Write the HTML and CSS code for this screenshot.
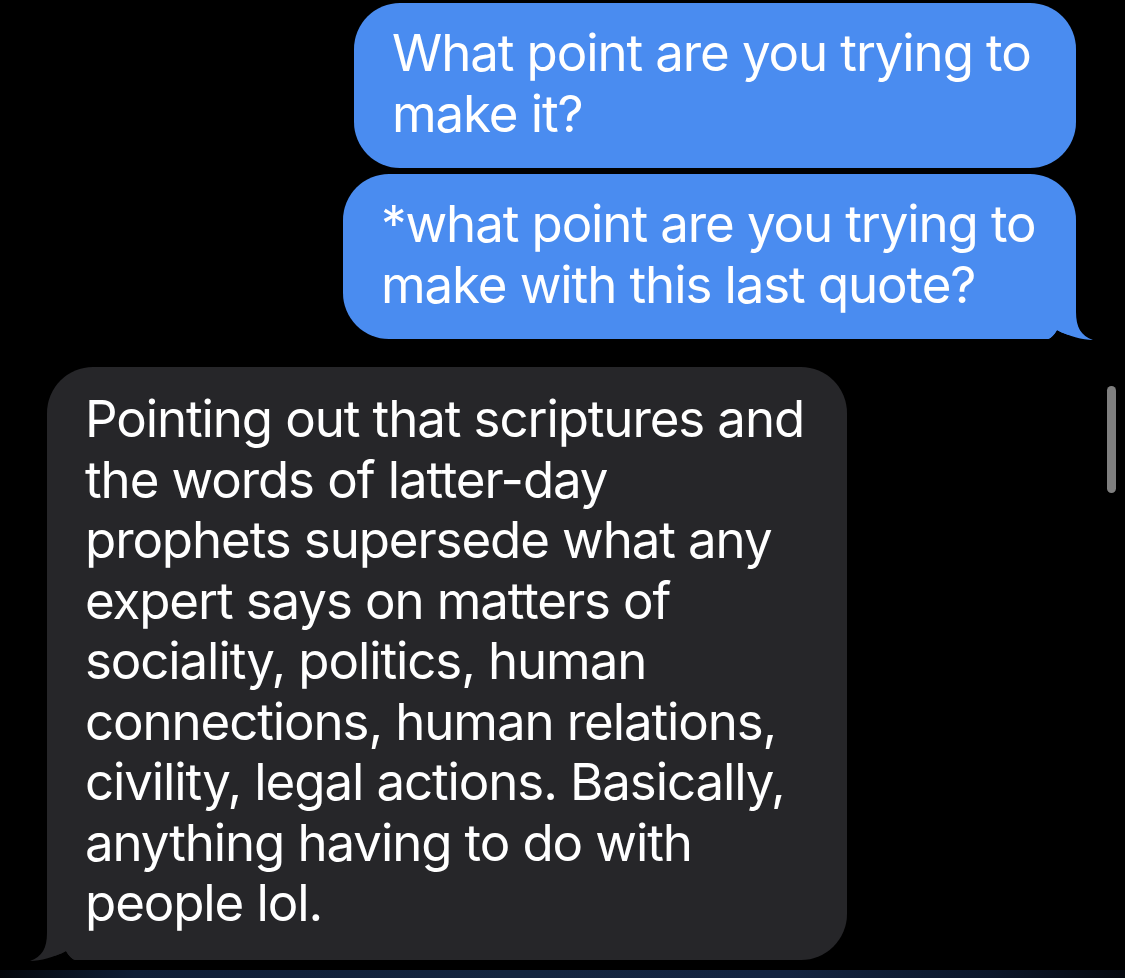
FILE: index.html
```html
<!DOCTYPE html>
<html>
<head>
<meta charset="utf-8">
<link rel="stylesheet" href="styles.css">
</head>
<body>
<div class="screen">
  <div class="thread">
    <div class="row me first">
      <div class="bubble blue w1"><span class="txt">What point are you trying to<br>make it?</span></div>
    </div>
    <div class="row me">
      <div class="bubble blue w2 tail-r"><span class="txt">*what point are you trying to<br>make with this last quote?</span>
        <svg class="tail tail-right" viewBox="0 0 45 53" width="45" height="53"><path class="cut" d="M0 49 C3 48 6 45 9 40 C20 46 35 50 45 50 V53 H0 Z"/><path class="fill-blue" d="M0 0 H28 V22 C28 37 33 46 45 50 C35 50 20 46 9 40 C6 45 3 48 0 49 Z"/></svg>
      </div>
    </div>
    <div class="row them">
      <div class="bubble gray w3 tail-l"><span class="txt">Pointing out that scriptures and<br>the words of latter-day<br>prophets supersede what any<br>expert says on matters of<br>sociality, politics, human<br>connections, human relations,<br>civility, legal actions. Basically,<br>anything having to do with<br>people lol.</span>
        <svg class="tail tail-left" viewBox="0 0 45 53" width="45" height="53"><path class="cut" d="M0 49 C3 48 6 45 9 40 C20 46 35 50 45 50 V53 H0 Z"/><path class="fill-gray" d="M0 0 H28 V22 C28 37 33 46 45 50 C35 50 20 46 9 40 C6 45 3 48 0 49 Z"/></svg>
      </div>
    </div>
  </div>
  <div class="scroll-ind"></div>
  <div class="home-glow"></div>
</div>
</body>
</html>
```
FILE: styles.css
```css
html, body {
  margin: 0;
  padding: 0;
  background: #000;
}
.screen {
  width: 1125px;
  height: 978px;
  background: #000;
  position: relative;
  overflow: hidden;
  display: flex;
  flex-direction: column;
  font-family: Inter, "Liberation Sans", sans-serif;
}
.thread {
  flex: 1;
  display: flex;
  flex-direction: column;
  padding-top: 3px;
}
.row {
  display: flex;
}
.row.me {
  justify-content: flex-end;
  padding-right: 49px;
  margin-bottom: 6px;
}
.row.me + .row.them {
  margin-top: 22px;
}
.row.them {
  justify-content: flex-start;
  padding-left: 47px;
}
.bubble {
  position: relative;
  box-sizing: border-box;
  border-radius: 46px;
  padding: 20px 0 24px 38px;
  color: #fff;
  font-size: 51px;
  line-height: 60.5px;
  white-space: nowrap;
  letter-spacing: -1.1px;
}
.txt {
  position: relative;
  z-index: 2;
}
.blue {
  background: #4a8cf0;
}
.gray {
  background: #262629;
  padding-top: 22px;
  padding-bottom: 26px;
  padding-left: 38px;
}
.w1 { width: 722px; }
.w2 { width: 733px; }
.w3 { width: 800px; }
.tail-r { border-bottom-right-radius: 20px; }
.tail-l { border-bottom-left-radius: 20px; }
.tail {
  position: absolute;
  bottom: -4px;
  z-index: 1;
  display: block;
}
.tail-right {
  right: -17px;
}
.tail-left {
  left: -17px;
  transform: scaleX(-1);
}
.cut { fill: #000; }
.fill-blue { fill: #4a8cf0; }
.fill-gray { fill: #262629; }
.scroll-ind {
  position: absolute;
  right: 9px;
  top: 386px;
  width: 9px;
  height: 107px;
  border-radius: 5px;
  background: #7f7f7f;
}
.home-glow {
  height: 8px;
  background: linear-gradient(90deg, #04070c 0%, #0f1e36 12%, #14253f 45%, #132440 70%, #0c172a 88%, #05080e 100%);
}
```
